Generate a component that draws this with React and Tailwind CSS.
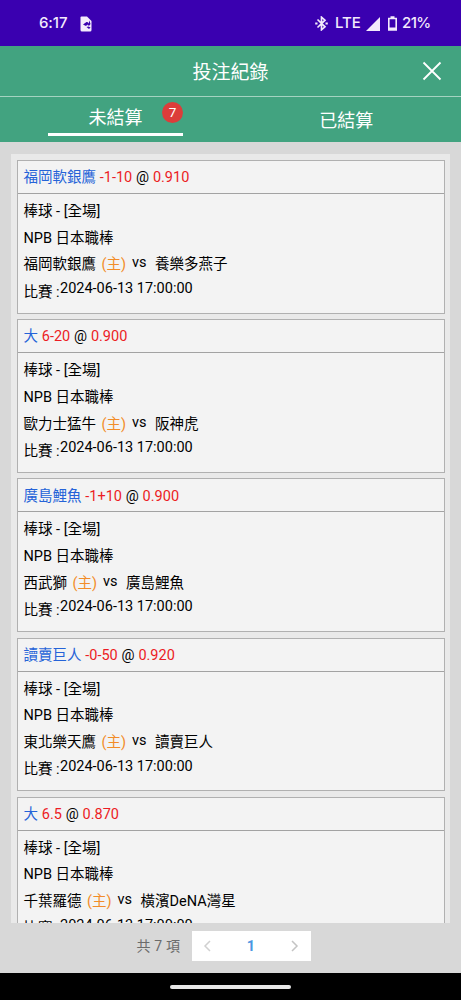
const bets = [
  { pick: '福岡軟銀鷹', line: '-1-10', odds: '0.910', home: '福岡軟銀鷹', away: '養樂多燕子' },
  { pick: '大', line: '6-20', odds: '0.900', home: '歐力士猛牛', away: '阪神虎' },
  { pick: '廣島鯉魚', line: '-1+10', odds: '0.900', home: '西武獅', away: '廣島鯉魚' },
  { pick: '讀賣巨人', line: '-0-50', odds: '0.920', home: '東北樂天鷹', away: '讀賣巨人' },
  { pick: '大', line: '6.5', odds: '0.870', home: '千葉羅德', away: '橫濱DeNA灣星' },
];

function StatusBar() {
  return (
    <div className="flex h-[46px] shrink-0 items-center bg-[#3a00b0] pl-[39px] pr-[31px] pt-px font-['Inter','Roboto',sans-serif] text-[15px] font-medium text-[#f3eafc]">
      <span className="w-[28px] whitespace-nowrap tracking-[-0.1px]">6:17</span>
      <svg className="ml-[13px]" width="12" height="16" viewBox="0 0 12 16">
        <path fill="#f3eafc" d="M1.500 0.500H7L11.500 5v9q0 1.500-1.500 1.500H2Q0.500 15.500 0.500 14V1.500Q0.500 .5 1.500 .5Z" />
        <path fill="#3a00b0" d="M3 8.500l3.500-2.500h1l1 1.500L9.500 4.500l1 3.500-1 1.500H8l-.5-1-1.500 1.500ZM6.500 11l2-.5 2 1-1.500 1.500Z" />
      </svg>
      <div className="ml-auto flex items-center">
        <svg width="13" height="15" viewBox="0 0 13 15" fill="none" stroke="#f3eafc" strokeWidth="1.700">
          <path d="M2.500 3.500l7.500 7.300-3.500 3V1.200L10 4.200l-7.500 7.300" />
          <path d="M.2 7.500h2.300M10.500 7.500h2.300" strokeWidth="2" />
        </svg>
        <span className="ml-[7px] w-[27px] whitespace-nowrap">LTE</span>
        <svg className="ml-[4px]" width="14" height="14" viewBox="0 0 14 14">
          <path fill="#f3eafc" d="M14 0v14H0Z" />
        </svg>
        <svg className="ml-[8px]" width="9" height="15" viewBox="0 0 9 15">
          <path fill="none" stroke="#f3eafc" strokeWidth="1.600" d="M.8 2.500h7.400v11.500H.8Z" />
          <path fill="#f3eafc" d="M2.500.3h4v2h-4ZM1 11.500h7V14H1Z" />
        </svg>
        <span className="ml-[5px] w-[28px] whitespace-nowrap tracking-[-0.600px]">21%</span>
      </div>
    </div>
  );
}

function BetCard({ bet }) {
  return (
    <article className="h-[153.7px] shrink-0 border border-[#b0b0b0] bg-[#f3f3f3] text-[14.5px] text-black">
      <h2 className="flex h-[33px] items-center gap-[3.8px] whitespace-nowrap border-b border-[#a2a2a2] pl-[5.5px] pt-[2px]">
        <span className="text-[#2563d8]">{bet.pick}</span>
        <span className="text-[#ec1c24]">{bet.line}</span>
        <span>@</span>
        <span className="text-[#ec1c24]">{bet.odds}</span>
      </h2>
      <div className="whitespace-nowrap pl-[5.5px] pt-[5px] leading-[26.7px]">
        <p>棒球 - [全場]</p>
        <p>NPB 日本職棒</p>
        <p className="flex items-start">
          <span>{bet.home}</span>
          <span className="ml-[5.5px] text-[#f28c28]">(主)</span>
          <span className="ml-[6px] leading-[22px]">vs</span>
          <span className="ml-[8.5px]">{bet.away}</span>
        </p>
        <p className="flex items-start">
          <span className="w-[36.5px] pt-[0.5px]">比賽 :</span>
          <span className="leading-[20.500px]">2024-06-13 17:00:00</span>
        </p>
      </div>
    </article>
  );
}

function Pagination() {
  return (
    <footer className="flex h-[50px] shrink-0 items-start pl-[136px] pt-[8px] text-[14px] text-[#6b6b6b]">
      <span className="w-[56px] whitespace-nowrap pl-[0.5px] leading-[30px] tracking-[0.2px]">共 7 項</span>
      <nav className="flex h-[30px] w-[119px] items-center justify-between bg-white pl-[11px] pr-[12px]">
        <svg width="9" height="12" viewBox="0 0 9 12" fill="none" stroke="#d0d0d0" strokeWidth="1.500">
          <path d="M7 1L2 6l5 5" />
        </svg>
        <span className="pt-px text-[14.500px] font-bold text-[#4a96e2]">1</span>
        <svg width="9" height="12" viewBox="0 0 9 12" fill="none" stroke="#c4c4c4" strokeWidth="1.500">
          <path d="M2 1l5 5-5 5" />
        </svg>
      </nav>
    </footer>
  );
}

export default function App() {
  return (
    <div className="flex h-[1000px] w-[461px] flex-col overflow-hidden bg-[#d8d8d8] font-['Roboto','Noto_Sans_CJK_TC',sans-serif]">
      <StatusBar />
      <header className="grid h-[51px] shrink-0 grid-cols-[1fr_auto_1fr] items-center border-b border-[#a5d3c1] bg-[#42a380] text-white">
        <h1 className="col-start-2 pt-[4px] text-[19px]">投注紀錄</h1>
        <button className="mr-[19px] justify-self-end" aria-label="關閉">
          <svg width="20" height="20" viewBox="0 0 20 20" fill="none" stroke="white" strokeWidth="1.800">
            <path d="M1.500 1.500l17 17M18.500 1.500l-17 17" />
          </svg>
        </button>
      </header>
      <div className="grid h-[45px] shrink-0 grid-cols-2 bg-[#42a380] text-[18px] text-white">
        <div className="relative ml-[48px] mt-[7px] h-[32px] w-[135px] border-b-[3px] border-white text-center leading-[27px]">
          未結算
          <span className="absolute right-0 -top-[2px] h-[21px] w-[21px] rounded-full bg-[#dc3d3a] text-center text-[13.500px] leading-[21px]">7</span>
        </div>
        <div className="pl-px pt-[12px] text-center leading-[24px]">已結算</div>
      </div>
      <main className="ml-[11px] mr-[11px] mt-[12px] flex h-[769px] shrink-0 flex-col gap-[5.500px] overflow-hidden bg-[#e9e9e9] pl-[6px] pr-[5px] pt-[6px]">
        {bets.map((bet, i) => (
          <BetCard key={i} bet={bet} />
        ))}
      </main>
      <Pagination />
      <div className="flex h-[27px] shrink-0 items-center justify-center bg-black">
        <div className="h-[4px] w-[121px] rounded-full bg-[#e8e8e8]" />
      </div>
    </div>
  );
}
